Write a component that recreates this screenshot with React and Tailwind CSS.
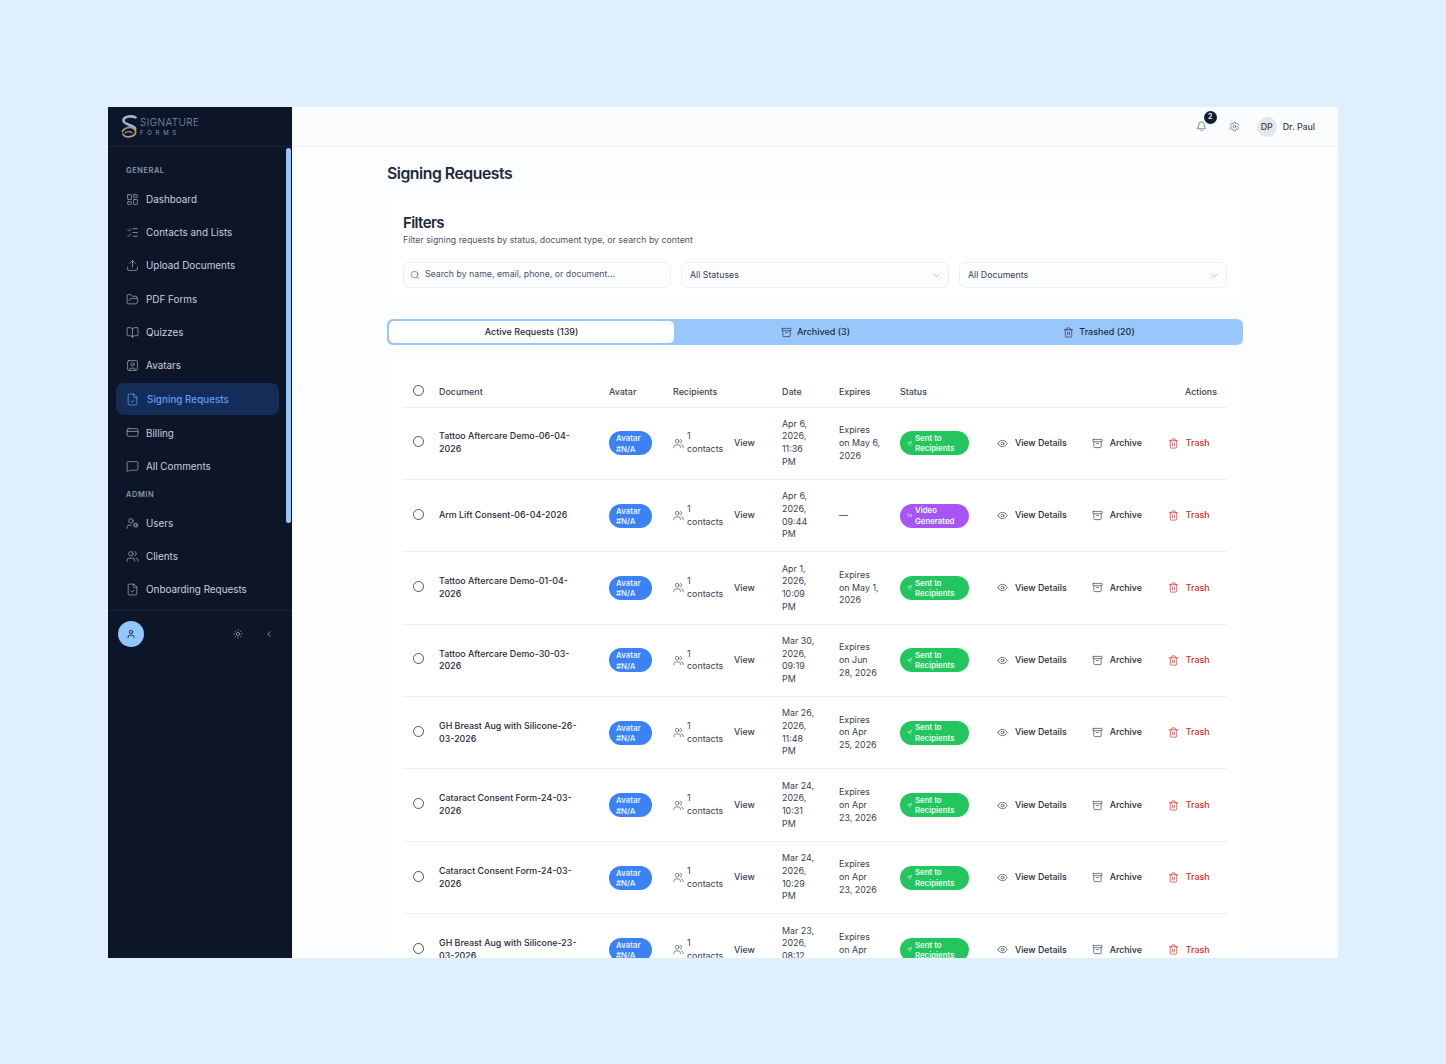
import React from "react";
import {
  Archive,
  Bell,
  BookOpen,
  ChevronDown,
  ChevronLeft,
  CreditCard,
  Eye,
  FileCheck,
  FolderOpen,
  LayoutDashboard,
  ListChecks,
  MessageSquare,
  Search,
  Send,
  Settings,
  SquareUser,
  Sun,
  Trash2,
  Upload,
  User,
  UserCog,
  Users,
  Video,
} from "lucide-react";

const generalNav = [
  { label: "Dashboard", icon: LayoutDashboard },
  { label: "Contacts and Lists", icon: ListChecks },
  { label: "Upload Documents", icon: Upload },
  { label: "PDF Forms", icon: FolderOpen },
  { label: "Quizzes", icon: BookOpen },
  { label: "Avatars", icon: SquareUser },
  { label: "Signing Requests", icon: FileCheck, active: true },
  { label: "Billing", icon: CreditCard },
  { label: "All Comments", icon: MessageSquare },
];

const adminNav = [
  { label: "Users", icon: UserCog },
  { label: "Clients", icon: Users },
  { label: "Onboarding Requests", icon: FileCheck },
];

const requests = [
  { name: "Tattoo Aftercare Demo-06-04-2026", date: "Apr 6, 2026, 11:36 PM", expires: "Expires on May 6, 2026" },
  { name: "Arm Lift Consent-06-04-2026", date: "Apr 6, 2026, 09:44 PM", expires: "—", video: true },
  { name: "Tattoo Aftercare Demo-01-04-2026", date: "Apr 1, 2026, 10:09 PM", expires: "Expires on May 1, 2026" },
  { name: "Tattoo Aftercare Demo-30-03-2026", date: "Mar 30, 2026, 09:19 PM", expires: "Expires on Jun 28, 2026" },
  { name: "GH Breast Aug with Silicone-26-03-2026", date: "Mar 26, 2026, 11:48 PM", expires: "Expires on Apr 25, 2026" },
  { name: "Cataract Consent Form-24-03-2026", date: "Mar 24, 2026, 10:31 PM", expires: "Expires on Apr 23, 2026" },
  { name: "Cataract Consent Form-24-03-2026", date: "Mar 24, 2026, 10:29 PM", expires: "Expires on Apr 23, 2026" },
  { name: "GH Breast Aug with Silicone-23-03-2026", date: "Mar 23, 2026, 08:12 PM", expires: "Expires on Apr 22, 2026" },
];

const Logo = () => (
  <svg width="17" height="23" viewBox="0 0 17 23" fill="none" className="shrink-0">
    <path d="M14.5 2.4C11 .8 4 .8 2.6 4.4 1.4 8 6.2 9.2 9 10.2c2.6.9 4.8 1.8 5.2 3.6" stroke="#9fb4d1" strokeWidth="2.6" strokeLinecap="round" />
    <path d="M1.4 16.4c1.6-3.6 7.8-5 11.2-3 3.6 2.2 2.2 6.8-2 8-3.6 1-8 .2-8.8-2.4" stroke="#b59a72" strokeWidth="1.7" strokeLinecap="round" />
    <path d="M4 17.8c2.4-1.6 5.6-1.4 7 0" stroke="#7f93b5" strokeWidth="1.3" strokeLinecap="round" />
  </svg>
);

const NavItem = ({ item }) => {
  const Icon = item.icon;
  if (item.active) {
    return (
      <div className="my-[1px] flex h-8 items-center gap-2 rounded-lg bg-[#142c58] pl-[10px] text-[#5b9df5]">
        <Icon size={13} strokeWidth={1.4} />
        <span className="text-[9.9px] font-medium">{item.label}</span>
      </div>
    );
  }
  return (
    <div className="flex h-[33.3px] items-center gap-[7.5px] pl-[9.5px] text-[#c9d0db]">
      <Icon size={13} strokeWidth={1.3} className="text-[#aab3c2]" />
      <span className="text-[9.9px]">{item.label}</span>
    </div>
  );
};

const Sidebar = () => (
  <aside className="relative flex w-[184px] shrink-0 flex-col bg-[#0c1628]">
    <div className="flex h-10 items-center gap-[2px] border-b border-[#16233a] pl-[13px]">
      <Logo />
      <div className="leading-none text-[#7f93b5]">
        <div className="-mt-[1px] text-[10px] font-light tracking-[0.04em]">SIGNATURE</div>
        <div className="mt-[3px] text-[6px] tracking-[0.62em]">FORMS</div>
      </div>
    </div>

    <nav className="border-b border-[#16233a] pb-[4px] pl-2 pr-[13px] pt-[18px]">
      <div className="mb-[5.5px] pl-[10px] text-[7.4px] font-semibold leading-[12px] tracking-[0.08em] text-[#8b96a8]">
        GENERAL
      </div>
      {generalNav.map((item) => (
        <NavItem key={item.label} item={item} />
      ))}
      <div className="mb-[5.5px] mt-[6px] pl-[10px] text-[7.4px] font-semibold leading-[12px] tracking-[0.08em] text-[#8b96a8]">
        ADMIN
      </div>
      {adminNav.map((item) => (
        <NavItem key={item.label} item={item} />
      ))}
    </nav>

    <div className="flex items-center pl-[10px] pt-[10px]">
      <div className="flex size-[26px] items-center justify-center rounded-full bg-[#93c5fd] text-[#0c1628]">
        <User size={10} />
      </div>
      <Sun size={10} className="ml-[89px] text-[#8b96a8]" />
      <ChevronLeft size={10} className="ml-[21px] text-[#98a2b3]" />
    </div>

    <div className="absolute right-[1px] top-[41px] h-[375px] w-[5px] rounded-full bg-[#93c5fd]" />
  </aside>
);

const TopBar = () => (
  <header className="flex h-10 shrink-0 items-center justify-end border-b border-[#eceef2] bg-[#fbfcfe] pr-[23px]">
    <div className="relative">
      <Bell size={11} strokeWidth={1.4} className="text-[#374151]" />
      <span className="absolute -right-[10px] -top-[10px] flex size-[13px] items-center justify-center rounded-full bg-[#0f1d33] text-[7px] font-semibold text-white">
        2
      </span>
    </div>
    <Settings size={11} strokeWidth={1.3} className="ml-[22px] text-[#4b5563]" />
    <div className="ml-[17px] flex size-5 items-center justify-center rounded-full bg-[#e5e7eb] text-[8.8px] font-medium text-[#374151]">
      DP
    </div>
    <span className="ml-[6px] text-[8.8px] font-medium text-[#374151]">Dr. Paul</span>
  </header>
);

const SelectBox = ({ label }) => (
  <div className="flex h-[26px] items-center justify-between rounded-md border border-[#eef0f3] bg-[#fcfdfe] pl-2 pr-[7px] text-[8.8px] text-[#374151]">
    {label}
    <ChevronDown size={9} className="text-[#9ca3af]" />
  </div>
);

const Filters = () => (
  <section className="mt-[13px] rounded-xl bg-white px-4 pb-[15px] pt-[17px]">
    <h2 className="text-[15px] font-semibold leading-[18px] tracking-[-0.04em] text-[#1e293b]">Filters</h2>
    <p className="mt-[2px] text-[8.77px] leading-[13px] text-[#4b5563]">
      Filter signing requests by status, document type, or search by content
    </p>
    <div className="mt-[15px] grid grid-cols-3 gap-[10px]">
      <div className="flex h-[26px] items-center gap-[5px] rounded-md border border-[#eef0f3] bg-[#fcfdfe] pl-[6px] text-[8.75px] text-[#4b5563]">
        <Search size={10} strokeWidth={1.5} className="text-[#4b5563]" />
        Search by name, email, phone, or document...
      </div>
      <SelectBox label="All Statuses" />
      <SelectBox label="All Documents" />
    </div>
  </section>
);

const Tabs = () => (
  <div className="mt-[16px] flex h-[26px] items-center rounded-md bg-[#98c8fb] p-[2px] text-[9px] font-medium text-[#1f2937]">
    <div className="flex h-[22px] w-[285px] items-center justify-center rounded-[5px] bg-white">Active Requests (139)</div>
    <div className="flex flex-1 items-center justify-center gap-[5px]">
      <Archive size={11} strokeWidth={1.4} />
      Archived (3)
    </div>
    <div className="flex w-[284px] items-center justify-center gap-[5px]">
      <Trash2 size={11} strokeWidth={1.4} />
      Trashed (20)
    </div>
  </div>
);

const Radio = () => <span className="mb-[3px] block size-[11px] rounded-full border border-[#4b5563] bg-white" />;

const Row = ({ row }) => {
  const StatusIcon = row.video ? Video : Send;
  return (
    <tr className="h-[72.4px] border-b border-[#eceef2] text-[8.9px] leading-[12.7px] text-[#374151]">
      <td className="pl-[10px]">
        <Radio />
      </td>
      <td className="pl-2 pr-[20px] font-medium text-[#1f2937]">{row.name}</td>
      <td className="px-2">
        <span className="block h-6 w-[43px] rounded-full bg-[#3b82f6] pl-[7px] pt-[2px] text-[7.8px] font-semibold leading-[10.4px] text-[#e6f0ff]">
          Avatar #N/A
        </span>
      </td>
      <td className="px-2">
        <div className="flex items-center">
          <Users size={11} strokeWidth={1.4} className="shrink-0" />
          <span className="ml-[3px] w-[37px]">1 contacts</span>
          <span className="ml-[10px] font-medium">View</span>
        </div>
      </td>
      <td className="pl-2 pr-[14px]">{row.date}</td>
      <td className="pl-2 pr-[10px]">{row.expires}</td>
      <td className="px-2">
        <span className={`flex h-6 w-[69px] items-center rounded-full pl-[7px] text-[7.8px] font-semibold leading-[10.4px] text-[#e8fff0] ${row.video ? "bg-[#a855f7]" : "bg-[#22c55e]"}`}>
          <StatusIcon size={5} className="mr-[3px] shrink-0" />
          <span>{row.video ? "Video Generated" : "Sent to Recipients"}</span>
        </span>
      </td>
      <td className="pr-[8px]">
        <div className="flex items-center justify-end text-[8.8px] font-medium">
          <Eye size={11} strokeWidth={1.5} />
          <span className="ml-[7px] text-[#1f2937]">View Details</span>
          <Archive size={11} strokeWidth={1.5} className="ml-[25px]" />
          <span className="ml-[7px] text-[#1f2937]">Archive</span>
          <Trash2 size={11} strokeWidth={1.5} className="ml-[26px] text-[#dc2626]" />
          <span className="ml-[7px] mr-[9.5px] text-[#dc2626]">Trash</span>
        </div>
      </td>
    </tr>
  );
};

const RequestsTable = () => (
  <section className="mt-[13px] rounded-xl bg-white px-4 pt-[14px]">
    <table className="w-[824px] table-fixed border-collapse">
      <colgroup>
        <col className="w-[28px]" />
        <col className="w-[170px]" />
        <col className="w-[64px]" />
        <col className="w-[109px]" />
        <col className="w-[57px]" />
        <col className="w-[61px]" />
        <col className="w-[91px]" />
        <col />
      </colgroup>
      <thead>
        <tr className="h-[35px] border-b border-[#eceef2] text-left text-[8.9px] text-[#374151] [&>th]:pt-[5px] [&>th]:font-medium">
          <th className="pl-[10px]">
            <Radio />
          </th>
          <th className="px-2">Document</th>
          <th className="px-2">Avatar</th>
          <th className="px-2">Recipients</th>
          <th className="px-2">Date</th>
          <th className="px-2">Expires</th>
          <th className="px-2">Status</th>
          <th className="pr-[10px] text-right">Actions</th>
        </tr>
      </thead>
      <tbody>
        {requests.map((row, i) => (
          <Row key={i} row={row} />
        ))}
      </tbody>
    </table>
  </section>
);

export default function App() {
  return (
    <div className="h-screen overflow-hidden bg-[#e0efff] pl-[108px] pt-[107px] font-['Inter',sans-serif]">
      <div className="flex h-[851px] w-[1230px] overflow-hidden">
        <Sidebar />
        <div className="flex min-w-0 flex-1 flex-col bg-[#fbfdff]">
          <TopBar />
          <main className="min-h-0 flex-1 overflow-hidden">
            <div className="mx-auto w-[856px] pt-[17px]">
              <h1 className="text-[15.8px] font-semibold leading-5 tracking-[-0.03em] text-[#1e293b]">Signing Requests</h1>
              <Filters />
              <Tabs />
              <RequestsTable />
            </div>
          </main>
        </div>
      </div>
    </div>
  );
}
